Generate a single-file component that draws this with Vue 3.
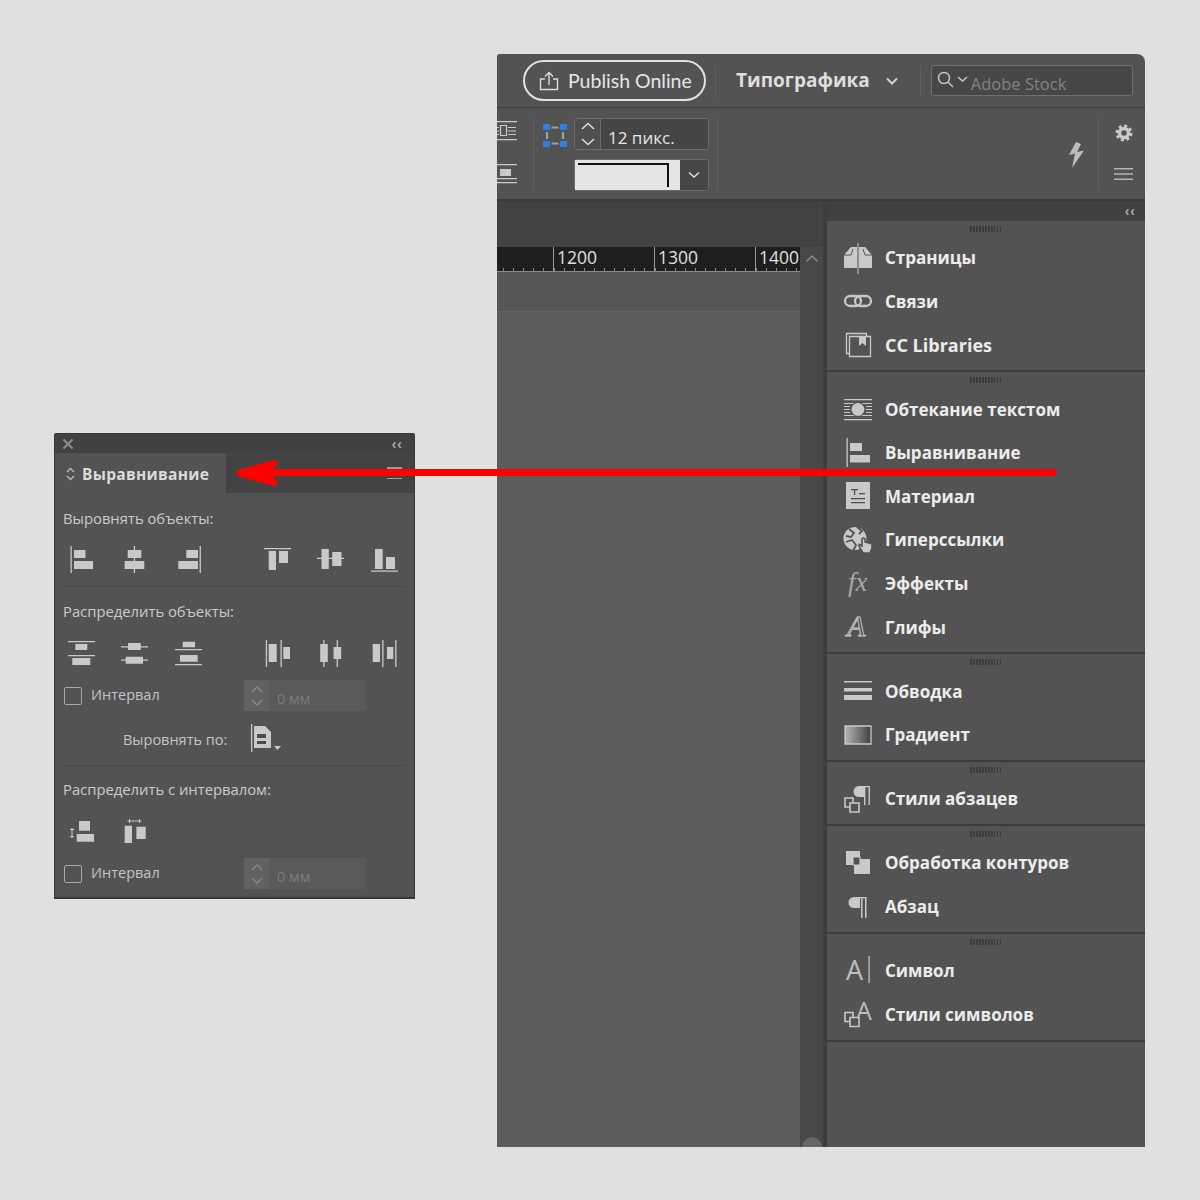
<script setup>
const r = (x, y, w, h) => `M${x} ${y}h${w}v${h}h${-w}z`
const solid = (...rects) => [{ d: rects.map(a => r(...a)).join(''), fill: '#c9c9c9' }]
const BG = '#535353'
const LIGHT = '#c9c9c9'
const outline = (d, w = 1.3, fill = 'none') => ({ d, fill, stroke: LIGHT, 'stroke-width': w })

const alignIcons = [
  solid([2.5, 0, 1.3, 27], [6, 4, 11.5, 8], [6, 15, 19, 8]),
  solid([12.8, 0, 1.3, 27], [6.7, 4, 13.6, 8], [3.7, 15, 19.6, 8]),
  solid([24.6, 0, 1.3, 27], [11.3, 4, 11.7, 8], [3.3, 15, 19.7, 8]),
  solid([0, 2, 27, 1.3], [4.7, 5, 7.3, 19], [15, 5, 9, 12]),
  solid([0, 11.7, 27, 1.3], [4.5, 3, 7.3, 20], [15.2, 6, 9.3, 14]),
  solid([0, 24.4, 27, 1.3], [4, 3, 7.7, 20], [15, 11, 9, 12]),
]
const distIcons = [
  solid([0, 1, 27, 1.3], [7.3, 4, 12, 6], [0, 15, 27, 1.3], [4.3, 18, 18, 7]),
  solid([0, 6.2, 27, 1.3], [7, 3, 12.7, 7], [0, 19.5, 27, 1.3], [4.7, 16.7, 17.3, 7]),
  solid([7.7, 1.7, 12.3, 5.6], [0, 9, 27, 1.3], [5, 15, 17.7, 6.7], [0, 24, 27, 1.3]),
  solid([1.8, 0, 1.3, 27], [4.7, 4, 8, 18], [16.5, 0, 1.3, 27], [19.3, 7, 6.7, 12]),
  solid([6.2, 0, 1.3, 27], [3.2, 4, 7.6, 18], [19.6, 0, 1.3, 27], [16.5, 7, 7.7, 12]),
  solid([11.2, 0, 1.3, 27], [1.7, 4, 7.3, 18], [24.2, 0, 1.3, 27], [16, 7, 6.3, 12]),
]
const spaceIcons = [
  solid([11, 3, 11, 9.7], [8.7, 16, 17.3, 7.7], [3.5, 10, 1, 10], [2, 11, 4, 1], [2, 18, 4, 1]),
  solid([3.7, 7.7, 7.3, 17.3], [15.4, 8.7, 9.3, 12.3], [6.5, 2.5, 14, 1], [8, 1, 1, 4], [18, 1, 1, 4]),
]

const squares = (y) => [
  outline(r(3, y, 8, 9), 1.6),
  outline(r(8, y + 5, 9, 9), 1.6, BG),
]

const groups = [
  [
    { label: 'Страницы', shapes: [
      { d: 'M2 26V13L9 5H15V26Z M17 26V5H23L30 13V26Z', fill: LIGHT },
      { d: 'M2 13H9L11 7 M30 13H23L21 7', fill: 'none', stroke: BG, 'stroke-width': 1 },
      ...solid([15.5, 1, 1, 31]),
    ] },
    { label: 'Связи', shapes: [
      outline('M8 11H14A5 5 0 0 1 14 21H8A5 5 0 0 1 8 11Z', 2.3),
      outline('M18 11H24A5 5 0 0 1 24 21H18A5 5 0 0 1 18 11Z', 2.3),
    ] },
    { label: 'CC Libraries', latin: true, shapes: [
      outline(r(4.5, 4.5, 20, 20)),
      outline(r(7.5, 7.5, 21, 20), 1.3, BG),
      { d: 'M17 8H24V17L20.5 14L17 17Z', fill: LIGHT },
    ] },
  ],
  [
    { label: 'Обтекание текстом', shapes: [
      ...solid([2, 6, 28, 1.3], [2, 10, 28, 1], [2, 22, 28, 1], [2, 26, 28, 1.3], [2, 13, 6, 1], [2, 16, 6, 1], [2, 19, 6, 1], [24, 13, 6, 1], [24, 16, 6, 1], [24, 19, 6, 1]),
      { d: 'M16 9A7.4 7.4 0 1 1 15.9 9Z', fill: BG },
      { d: 'M16 10A6.4 6.4 0 1 1 15.9 10Z', fill: LIGHT },
    ] },
    { label: 'Выравнивание', shapes: solid([4.5, 1, 1.3, 29], [8, 6, 12, 8], [8, 18, 20, 7.5]) },
    { label: 'Материал', shapes: [
      ...solid([4, 2, 24, 27]),
      { d: r(9, 9, 7, 1.2) + r(12, 9, 1.2, 6) + r(17, 13, 6, 1.2) + r(9, 18, 14, 1.2) + r(9, 22, 14, 1.2), fill: '#4c4c4c' },
    ] },
    { label: 'Гиперссылки', shapes: [
      { d: 'M13 3A11.5 11.5 0 1 1 12.9 3Z', fill: LIGHT },
      { d: 'M7 5L12 9L9 13L4 12 M15 3L20 7L17 10 M4 18L10 16L14 21L11 27', fill: 'none', stroke: BG, 'stroke-width': 1.8 },
      { d: 'M20 15V22L18 20.5Q16.5 20 17 22L21 29H28L30 24V20L23 18V15Q21.5 13 20 15Z', fill: LIGHT, stroke: BG, 'stroke-width': 1.6 },
    ] },
    { label: 'Эффекты', text: 'fx', cls: 'g-fx', x: 6, y: 24 },
    { label: 'Глифы', text: 'A', cls: 'g-script', x: 5, y: 25 },
  ],
  [
    { label: 'Обводка', shapes: solid([2, 6, 28, 1.5], [2, 13, 28, 3.5], [2, 20, 28, 5]) },
    { label: 'Градиент', grad: true, shapes: [
      { d: r(3, 7, 26, 18), fill: 'url(#dockGrad)', stroke: LIGHT, 'stroke-width': 1.3 },
    ] },
  ],
  [
    { label: 'Стили абзацев', shapes: [
      { d: 'M22 3H17A5.5 5.5 0 0 0 17 14H22Z', fill: LIGHT },
      ...solid([22, 3, 1.4, 19], [26.5, 3, 1.4, 19], [22, 3, 5, 1.3]),
      ...squares(15),
    ] },
  ],
  [
    { label: 'Обработка контуров', shapes: [
      ...solid([4, 4, 14, 14], [12, 12, 16, 15]),
      { d: r(11, 10, 7, 8), fill: BG, stroke: LIGHT, 'stroke-width': 1.2 },
    ] },
    { label: 'Абзац', shapes: [
      { d: 'M18 6H12A5.5 5.5 0 0 0 12 17H18Z', fill: LIGHT },
      ...solid([19, 6, 1.5, 21], [23, 6, 1.5, 21], [18, 6, 6, 1.3]),
    ] },
  ],
  [
    { label: 'Символ', text: 'A', cls: 'g-char', x: 4, y: 25, shapes: solid([26.5, 1, 1.2, 27]) },
    { label: 'Стили символов', text: 'A', cls: 'g-char2', x: 14, y: 21.5, shapes: squares(14.5) },
  ],
]
const rulerMarks = [1200, 1300, 1400]
</script>

<template>
  <div class="page">
    <section class="panel">
      <div class="panel-title">
        <svg class="x" width="12" height="12" viewBox="0 0 12 12"><path d="M1.500 1.500L10.500 10.500M10.500 1.500L1.500 10.500" stroke="#8d8d8d" stroke-width="2" /></svg>
        <span class="collapse">‹‹</span>
      </div>
      <div class="panel-tabs">
        <div class="tab">
          <svg width="9" height="14" viewBox="0 0 9 14"><path d="M1 5L4.500 1.500L8 5M1 9L4.500 12.500L8 9" fill="none" stroke="#bdbdbd" stroke-width="1.300" /></svg>
          <span>Выравнивание</span>
        </div>
        <div class="tab-menu"><i></i><i></i></div>
      </div>
      <div class="panel-body">
        <div class="lbl first">Выровнять объекты:</div>
        <div class="icon-row r1">
          <svg v-for="(ic, i) in alignIcons" :key="i" :class="{ split: i === 3 }" width="27" height="27" viewBox="0 0 27 27"><path v-for="(s, j) in ic" :key="j" v-bind="s" /></svg>
        </div>
        <div class="sep s1"></div>
        <div class="lbl l2">Распределить объекты:</div>
        <div class="icon-row r2">
          <svg v-for="(ic, i) in distIcons" :key="i" :class="{ split: i === 3 }" width="27" height="27" viewBox="0 0 27 27"><path v-for="(s, j) in ic" :key="j" v-bind="s" /></svg>
        </div>
        <div class="interval i1">
          <span class="check"></span>
          <span class="int-label">Интервал</span>
          <div class="spin">
            <div class="spin-arrows"><svg width="14" height="24" viewBox="0 0 14 24"><path d="M2 8L7 3L12 8M2 16L7 21L12 16" fill="none" stroke="#8a8a8a" stroke-width="1.300" /></svg></div>
            <span class="spin-val">0 мм</span>
          </div>
        </div>
        <div class="align-to">
          <span class="align-label">Выровнять по:</span>
          <svg width="34" height="28" viewBox="0 0 34 28">
            <path d="M0 0h1.300v28H0z" fill="#c9c9c9" />
            <path d="M3 2H14L20 8V24H3Z" fill="#c9c9c9" />
            <path d="M6 10H15V14H6ZM6 17H15V20H6Z" fill="#4c4c4c" />
            <path d="M23 22H30L26.500 26Z" fill="#c9c9c9" />
          </svg>
        </div>
        <div class="sep s2"></div>
        <div class="lbl l3">Распределить с интервалом:</div>
        <div class="icon-row r3">
          <svg v-for="(ic, i) in spaceIcons" :key="i" width="27" height="27" viewBox="0 0 27 27"><path v-for="(s, j) in ic" :key="j" v-bind="s" /></svg>
        </div>
        <div class="interval i2">
          <span class="check"></span>
          <span class="int-label">Интервал</span>
          <div class="spin">
            <div class="spin-arrows"><svg width="14" height="24" viewBox="0 0 14 24"><path d="M2 8L7 3L12 8M2 16L7 21L12 16" fill="none" stroke="#8a8a8a" stroke-width="1.300" /></svg></div>
            <span class="spin-val">0 мм</span>
          </div>
        </div>
      </div>
    </section>

    <section class="app">
      <header class="titlebar">
        <button class="publish">
          <svg width="20" height="20" viewBox="0 0 20 20"><path d="M6 8H1.500V18.500H18.500V8H14M10 14V2M6 5.500L10 1.500L14 5.500" fill="none" stroke="#dcdcdc" stroke-width="1.400" /></svg>
          <span>Publish Online</span>
        </button>
        <div class="vsep v1"></div>
        <span class="workspace">Типографика</span>
        <svg class="chev" width="12" height="8" viewBox="0 0 12 8"><path d="M1 1.500L6 6.500L11 1.500" fill="none" stroke="#d0d0d0" stroke-width="2" /></svg>
        <div class="vsep v2"></div>
        <div class="search">
          <svg width="34" height="22" viewBox="0 0 34 22"><circle cx="8" cy="8" r="5.500" fill="none" stroke="#c9c9c9" stroke-width="1.400" /><path d="M12 12L17 17M22 7L26.500 11L31 7" fill="none" stroke="#c9c9c9" stroke-width="1.400" /></svg>
          <span>Adobe Stock</span>
        </div>
      </header>

      <div class="toolbar">
        <div class="clip-icons">
          <svg width="20" height="22" viewBox="0 0 20 22"><path d="M0 1h20v1.300H0zM0 19h20v1.300H0zM11 7h8v1H11zM11 10.500h8v1H11zM11 14h8v1H11zM0 7h2v1H0zM0 10.500h2v1H0zM0 14h2v1H0z" fill="#c9c9c9" /><path d="M3.500 5.500h6v10h-6z" fill="none" stroke="#c9c9c9" stroke-width="1.200" /></svg>
          <svg width="20" height="22" viewBox="0 0 20 22"><path d="M0 1h20v1.300H0zM0 19h20v1.300H0zM0 15h20v1.300H0zM3 6h11v7H3z" fill="#c9c9c9" /></svg>
        </div>
        <div class="vsep v3"></div>
        <svg class="sel" width="24" height="23" viewBox="0 0 24 23">
          <path d="M8.500 3.500H15.500M8.500 19.500H15.500M4 8V15M20 8V15" stroke="#a0a0a0" stroke-width="2.200" fill="none" />
          <path d="M0 0h7v6H0zM17 0h7v6h-7zM0 17h7v6H0zM17 17h7v6h-7z" fill="#2f7fe0" />
        </svg>
        <div class="stack">
          <div class="stepper">
            <div class="step-arrows"><svg width="16" height="28" viewBox="0 0 16 28"><path d="M2 9L8 3.500L14 9M2 19L8 24.500L14 19" fill="none" stroke="#dcdcdc" stroke-width="1.500" /></svg></div>
            <span>12 пикс.</span>
          </div>
          <div class="stroke-select">
            <div class="swatch"><i></i></div>
            <div class="drop"><svg width="12" height="8" viewBox="0 0 12 8"><path d="M1 1.500L6 6L11 1.500" fill="none" stroke="#e0e0e0" stroke-width="1.500" /></svg></div>
          </div>
        </div>
        <div class="vsep v4"></div>
        <div class="tool-spacer"></div>
        <svg class="bolt" width="18" height="26" viewBox="0 0 18 26"><path d="M9 0L2 13L8 11.500L5 26L17 8.500L10 10L14 2Z" fill="#bdbdbd" /></svg>
        <div class="vsep v5"></div>
        <div class="tool-end">
          <svg width="18" height="18" viewBox="0 0 18 18"><circle cx="9" cy="9" r="4.500" fill="none" stroke="#c9c9c9" stroke-width="3.600" /><circle cx="9" cy="9" r="7.200" fill="none" stroke="#c9c9c9" stroke-width="2.600" stroke-dasharray="3 2.650" /></svg>
          <svg width="19" height="12" viewBox="0 0 19 12"><path d="M0 0h19v1.400H0zM0 5.300h19v1.400H0zM0 10.600h19v1.400H0z" fill="#b5b5b5" /></svg>
        </div>
      </div>

      <div class="work">
        <div class="doc">
          <div class="doc-strip"></div>
          <div class="doc-main">
            <div class="doc-left">
              <div class="ruler">
                <div class="ruler-lead"></div>
                <div v-for="m in rulerMarks" :key="m" class="mark">{{ m }}</div>
              </div>
              <div class="pasteboard-top"></div>
              <div class="pasteboard"></div>
            </div>
            <div class="scroll">
              <svg width="14" height="9" viewBox="0 0 14 9"><path d="M1.500 7.500L7 2L12.500 7.500" fill="none" stroke="#8c8c8c" stroke-width="1.400" /></svg>
              <div class="nub"></div>
            </div>
          </div>
        </div>
        <div class="gutter"></div>
        <aside class="dock">
          <div class="dock-head"><span class="collapse">‹‹</span></div>
          <div v-for="(g, gi) in groups" :key="gi" class="group">
            <div class="grip"></div>
            <div v-for="it in g" :key="it.label" class="dock-item" :class="{ latin: it.latin }">
              <svg width="32" height="32" viewBox="0 0 32 32">
                <defs v-if="it.grad">
                  <linearGradient id="dockGrad" x1="0" x2="1" y1="0" y2="0"><stop offset="0" stop-color="#b5b5b5" /><stop offset="1" stop-color="#404040" /></linearGradient>
                </defs>
                <text v-if="it.text" :class="it.cls" :x="it.x" :y="it.y">{{ it.text }}</text>
                <path v-for="(s, j) in it.shapes" :key="j" v-bind="s" />
              </svg>
              <span>{{ it.label }}</span>
            </div>
          </div>
        </aside>
      </div>
    </section>

    <svg class="arrow" width="1200" height="1200" viewBox="0 0 1200 1200">
      <path d="M1053 472.500H250" fill="none" stroke="#fe0000" stroke-width="7" stroke-linecap="round" />
      <path d="M274 463.500L240 473L274 482.500" fill="#fe0000" stroke="#fe0000" stroke-width="7" stroke-linecap="round" stroke-linejoin="round" />
    </svg>
  </div>
</template>

<style>
html, body { margin: 0; background: #e0e0de; }
</style>

<style scoped>
.page { position: relative; width: 1200px; height: 1200px; background: #e0e0de; overflow: hidden; font-family: "Open Sans", "Noto Sans", sans-serif; }
.arrow { position: absolute; left: 0; top: 0; pointer-events: none; }
.collapse { font-size: 14px; line-height: 14px; font-weight: 700; letter-spacing: 1px; color: #a9a9a9; font-family: "Liberation Sans", sans-serif; }

/* floating panel */
.panel { position: absolute; left: 54px; top: 433px; width: 361px; height: 466px; box-sizing: border-box; border: 1px solid #383838; border-bottom-width: 2px; background: #535353; border-radius: 2px 2px 0 0; }
.panel-title { height: 19px; background: #414141; display: flex; align-items: center; justify-content: space-between; padding: 0 11px 0 7px; }
.panel-tabs { height: 40px; background: #434343; display: flex; justify-content: space-between; }
.tab { width: 171px; background: #535353; display: flex; align-items: center; gap: 7px; padding: 2px 0 0 11px; box-sizing: border-box; color: #dcdcdc; font-size: 15.500px; font-weight: 700; letter-spacing: .3px; white-space: nowrap; }
.tab-menu { display: flex; flex-direction: column; justify-content: center; gap: 9px; padding-right: 12px; }
.tab-menu i { display: block; width: 15px; height: 1.500px; background: #9c9c9c; }
.panel-body { padding: 0 9px 0 8px; }
.lbl { height: 20px; line-height: 20px; font-size: 14.800px; color: #cbcbcb; white-space: nowrap; }
.lbl.first { margin-top: 15px; }
.icon-row { display: flex; gap: 26.330px; margin-left: 5px; height: 27px; }
.icon-row svg { flex: none; }
.icon-row .split { margin-left: 36px; }
.r1 { margin-top: 18px; }
.s1 { margin-top: 13px; }
.l2 { margin-top: 14px; }
.r2 { margin-top: 19px; }
.sep { height: 1px; background: #494949; }
.s2 { margin-top: 13px; }
.l3 { margin-top: 13px; }
.r3 { margin-top: 19px; }
.interval { display: flex; align-items: center; height: 31px; margin-top: 13px; }
.check { width: 16px; height: 16px; margin-left: 1px; border: 1px solid #a9a9a9; border-radius: 2px; flex: none; }
.int-label { margin: -2px 0 0 9px; width: 153px; font-size: 14.500px; color: #c4c4c4; }
.spin { width: 122px; height: 31px; display: flex; align-items: center; background: #5a5a5a; border-radius: 2px; }
.spin-arrows { width: 25px; height: 31px; background: #626262; display: flex; align-items: center; justify-content: center; }
.spin-val { margin-left: 8px; margin-top: 6px; font-size: 14.500px; color: #7c7c7c; }
.align-to { display: flex; align-items: center; height: 28px; margin-top: 13px; padding-left: 60px; }
.align-label { width: 128px; margin-top: 2px; font-size: 14.500px; color: #c4c4c4; }

/* application window */
.app { position: absolute; left: 497px; top: 54px; width: 648px; height: 1093px; display: flex; flex-direction: column; background: #535353; border-radius: 3px 8px 0 0; overflow: hidden; }
.titlebar { height: 53px; flex: none; display: flex; align-items: center; border-bottom: 1px solid #3f3f3f; box-sizing: content-box; padding-left: 26px; }
.publish { width: 183px; height: 41px; box-sizing: border-box; border: 2px solid #e2e2e2; border-radius: 21px; background: none; display: flex; align-items: center; gap: 9px; padding: 0 0 0 14px; color: #e6e6e6; font-family: Lato, "Open Sans", sans-serif; font-size: 19.500px; white-space: nowrap; }
.vsep { width: 1px; background: #5f5f5f; flex: none; }
.v1 { height: 32px; margin-left: 9px; }
.workspace { margin: -2px 0 0 20px; font-size: 19px; font-weight: 700; color: #dedede; white-space: nowrap; }
.chev { margin-left: 16px; }
.v2 { height: 32px; margin-left: 22px; }
.search { margin-left: 10px; width: 202px; height: 31px; box-sizing: border-box; border: 1.500px solid #707070; border-radius: 3px; background: #474747; display: flex; align-items: center; padding-left: 4px; gap: 1px; color: #828282; font-size: 16.500px; white-space: nowrap; }
.search span { margin-top: 5px; }
.toolbar { height: 91px; flex: none; display: flex; align-items: center; border-bottom: 2px solid #3a3a3a; }
.clip-icons { width: 20px; display: flex; flex-direction: column; gap: 21px; margin-top: -2px; }
.v3 { height: 72px; margin-left: 16px; }
.sel { margin-left: 9px; margin-bottom: 37px; }
.stack { margin: 1px 0 0 7px; display: flex; flex-direction: column; gap: 9px; width: 135px; }
.stepper { height: 32px; box-sizing: border-box; border: 1.500px solid #6b6b6b; border-radius: 3px; background: #454545; display: flex; align-items: center; color: #e6e6e6; font-size: 17px; }
.stepper span { margin-left: 7px; margin-top: 7px; white-space: nowrap; }
.step-arrows { width: 25px; height: 100%; background: #4f4f4f; border-right: 1.500px solid #6b6b6b; display: flex; align-items: center; justify-content: center; }
.stroke-select { height: 32px; box-sizing: border-box; border: 1.500px solid #6b6b6b; border-radius: 3px; display: flex; }
.swatch { width: 105px; background: #e4e4e4; position: relative; }
.swatch i { position: absolute; left: 3px; right: 11px; top: 3px; height: 24px; box-sizing: border-box; border-top: 2px solid #111; border-right: 2px solid #111; }
.drop { flex: 1; background: #474747; display: flex; align-items: center; justify-content: center; }
.v4 { height: 72px; margin-left: 8px; }
.tool-spacer { flex: 1; }
.bolt { margin-top: 2px; }
.v5 { height: 72px; margin-left: 13px; }
.tool-end { width: 46px; box-sizing: border-box; padding-left: 3px; margin-top: -3px; display: flex; flex-direction: column; align-items: center; gap: 26px; }

.work { flex: 1; min-height: 0; display: flex; }
.doc { width: 326px; flex: none; display: flex; flex-direction: column; }
.doc-strip { height: 46px; flex: none; background: #424242; }
.doc-main { flex: 1; display: flex; min-height: 0; }
.doc-left { flex: 1; min-width: 0; display: flex; flex-direction: column; }
.ruler { height: 25px; flex: none; display: flex; box-sizing: border-box; background-color: #1e1e1e; background-image: repeating-linear-gradient(90deg, #8a8a8a 0, #8a8a8a 1px, transparent 1px, transparent 10.100px); background-size: 100% 3px; background-repeat: no-repeat; background-position: 6px bottom; border-bottom: 1px solid #8a8a8a; }
.ruler-lead { width: 56px; flex: none; }
.mark { width: 101px; flex: none; box-sizing: border-box; border-left: 1px solid #9a9a9a; padding-left: 3px; color: #e0e0e0; font-size: 17.500px; line-height: 21px; }
.mark:last-child { width: 45px; }
.pasteboard-top { height: 39px; flex: none; background: #575757; border-bottom: 1px solid #646464; }
.pasteboard { flex: 1; background: #5c5c5c; }
.scroll { width: 23px; flex: none; background: #484848; display: flex; flex-direction: column; align-items: center; justify-content: space-between; padding-top: 7px; box-sizing: border-box; overflow: hidden; }
.nub { width: 20px; height: 20px; border-radius: 50%; background: #666; margin-bottom: -10px; }
.gutter { width: 4px; background: #3e3e3e; flex: none; }
.dock { flex: 1; min-width: 0; display: flex; flex-direction: column; }
.dock-head { height: 20px; background: #404040; display: flex; align-items: center; justify-content: flex-end; padding-right: 9px; flex: none; }
.group { position: relative; padding: 15px 0 3.500px; border-bottom: 2px solid #3c3c3c; }
.grip { position: absolute; left: 143px; top: 5px; width: 31px; height: 6px; background: repeating-linear-gradient(90deg, #3b3b3b 0, #3b3b3b 1.500px, transparent 1.500px, transparent 3px); }
.dock-item { height: 43.600px; display: flex; align-items: center; padding-left: 15px; color: #ececec; font-size: 17px; font-weight: 700; white-space: nowrap; }
.dock-item.latin { font-size: 18px; }
.dock-item svg { flex: none; margin-right: 11px; overflow: visible; }
.g-fx { font-family: "Liberation Serif", serif; font-style: italic; font-weight: 400; font-size: 27px; fill: #a6a6a6; }
.g-script { font-family: "Liberation Serif", serif; font-style: italic; font-weight: 400; font-size: 30px; fill: none; stroke: #c4c4c4; stroke-width: 1; }
.g-char { font-family: "Open Sans", sans-serif; font-weight: 400; font-size: 27px; fill: #bdbdbd; }
.g-char2 { font-family: "Open Sans", sans-serif; font-weight: 400; font-size: 25px; fill: #bdbdbd; }
</style>
